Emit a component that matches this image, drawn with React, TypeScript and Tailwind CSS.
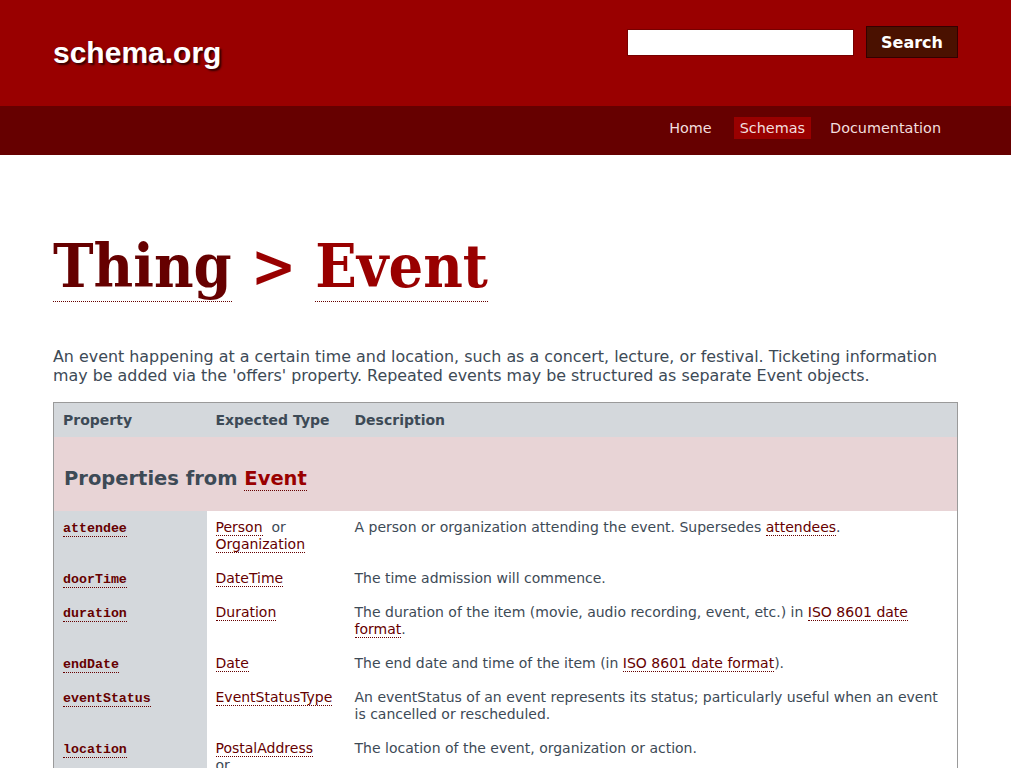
import React from "react";

const L = ({ children, dark = true }: { children: React.ReactNode; dark?: boolean }) => (
  <a
    href="#"
    className={`${dark ? "text-[#660000]" : "text-[#990000]"} border-b border-dotted border-[#660000] no-underline`}
  >
    {children}
  </a>
);

const rows: { name: string; types: string[]; desc: React.ReactNode }[] = [
  {
    name: "attendee",
    types: ["Person", "Organization"],
    desc: (
      <>
        A person or organization attending the event. Supersedes <L>attendees</L>.
      </>
    ),
  },
  { name: "doorTime", types: ["DateTime"], desc: "The time admission will commence." },
  {
    name: "duration",
    types: ["Duration"],
    desc: (
      <>
        The duration of the item (movie, audio recording, event, etc.) in <L>ISO 8601 date format</L>.
      </>
    ),
  },
  {
    name: "endDate",
    types: ["Date"],
    desc: (
      <>
        The end date and time of the item (in <L>ISO 8601 date format</L>).
      </>
    ),
  },
  {
    name: "eventStatus",
    types: ["EventStatusType"],
    desc: "An eventStatus of an event represents its status; particularly useful when an event is cancelled or rescheduled.",
  },
  {
    name: "location",
    types: ["PostalAddress", "Place"],
    desc: "The location of the event, organization or action.",
  },
  {
    name: "offers",
    types: ["Offer"],
    desc: "An offer to sell this item—for example, an offer to sell a product, the DVD of a movie, or tickets to an event.",
  },
];

export default function App() {
  return (
    <div className="w-[1011px] font-['DejaVu_Sans',sans-serif] text-[#3d4a56]">
      <header className="bg-[#990000]">
        <div className="mx-[53px] flex h-[106px] items-start justify-between">
          <div className="mt-[35px] font-['Liberation_Sans',Arial,sans-serif] text-[30px] font-bold leading-[36px] text-white [text-shadow:2px_2px_2px_#330000]">
            schema.org
          </div>
          <div className="mt-[26px] flex items-center gap-3">
            <input className="h-[27px] w-[227px] border border-[#770000] bg-white" />
            <button className="h-[32px] w-[92px] border border-[#330000] bg-[#4a1100] pt-[1px] text-[16px] font-bold text-white">
              Search
            </button>
          </div>
        </div>
        <nav className="bg-[#660000]">
          <div className="mx-[53px] flex h-[49px] items-start justify-end pr-[11px] pt-[11px] text-[14.4px] leading-[22px] text-[#f2dede]">
            <a className="px-[6px]">Home</a>
            <a className="ml-[16px] bg-[#990000] px-[6px]">Schemas</a>
            <a className="ml-[13px] px-[6px]">Documentation</a>
          </div>
        </nav>
      </header>

      <main className="mx-[53px] pb-10">
        <h1 className="mt-[75px] font-['DejaVu_Serif_Condensed','DejaVu_Serif',serif] text-[60.6px] font-bold leading-[72px] text-[#990000] [font-stretch:semi-condensed]">
          <a href="#" className="border-b border-dotted border-[#660000] text-[#660000]">Thing</a>
          {" > "}
          <a href="#" className="border-b border-dotted border-[#660000]">Event</a>
        </h1>
        <p className="mt-[45px] text-[15.9px] leading-[19px] text-[#3d4a56]">
          An event happening at a certain time and location, such as a concert, lecture, or festival. Ticketing
          information may be added via the 'offers' property. Repeated events may be structured as separate Event
          objects.
        </p>

        <table className="mt-[17px] w-[905px] border-collapse border border-[#9a9a9a] text-[14px] leading-[17px]">
          <thead>
            <tr className="bg-[#d4d8dc] text-left font-bold text-[#3d4a56]">
              <th className="w-[153px] px-[9px] pb-[8px] pt-[9px]">Property</th>
              <th className="w-[138px] px-[9px] pb-[8px] pt-[9px]">Expected Type</th>
              <th className="px-[10px] pb-[8px] pt-[9px]">Description</th>
            </tr>
          </thead>
          <tbody>
            <tr className="bg-[#e8d4d6]">
              <th
                colSpan={3}
                className="px-[10px] pb-[20px] pt-[30px] text-left text-[19.5px] font-bold leading-[24px] text-[#3d4a56]"
              >
                Properties from <L dark={false}>Event</L>
              </th>
            </tr>
            {rows.map((r) => (
              <tr key={r.name} className="align-top">
                <th className="bg-[#d4d8dc] px-[9px] pb-[8.5px] pt-[9px] text-left">
                  <code className="block font-['Liberation_Mono',monospace] text-[13.3px] font-bold leading-[17px]">
                    <L>{r.name}</L>
                  </code>
                </th>
                <td className="px-[9px] pb-[8.5px] pt-[8px]">
                  {r.types.map((t, i) => (
                    <React.Fragment key={t}>
                      {i > 0 && <>&nbsp; or<br /></>}
                      <L>{t}</L>
                    </React.Fragment>
                  ))}
                </td>
                <td className="px-[10px] pb-[8.5px] pt-[8px] text-[#3d4a56]">{r.desc}</td>
              </tr>
            ))}
          </tbody>
        </table>
      </main>
    </div>
  );
}
